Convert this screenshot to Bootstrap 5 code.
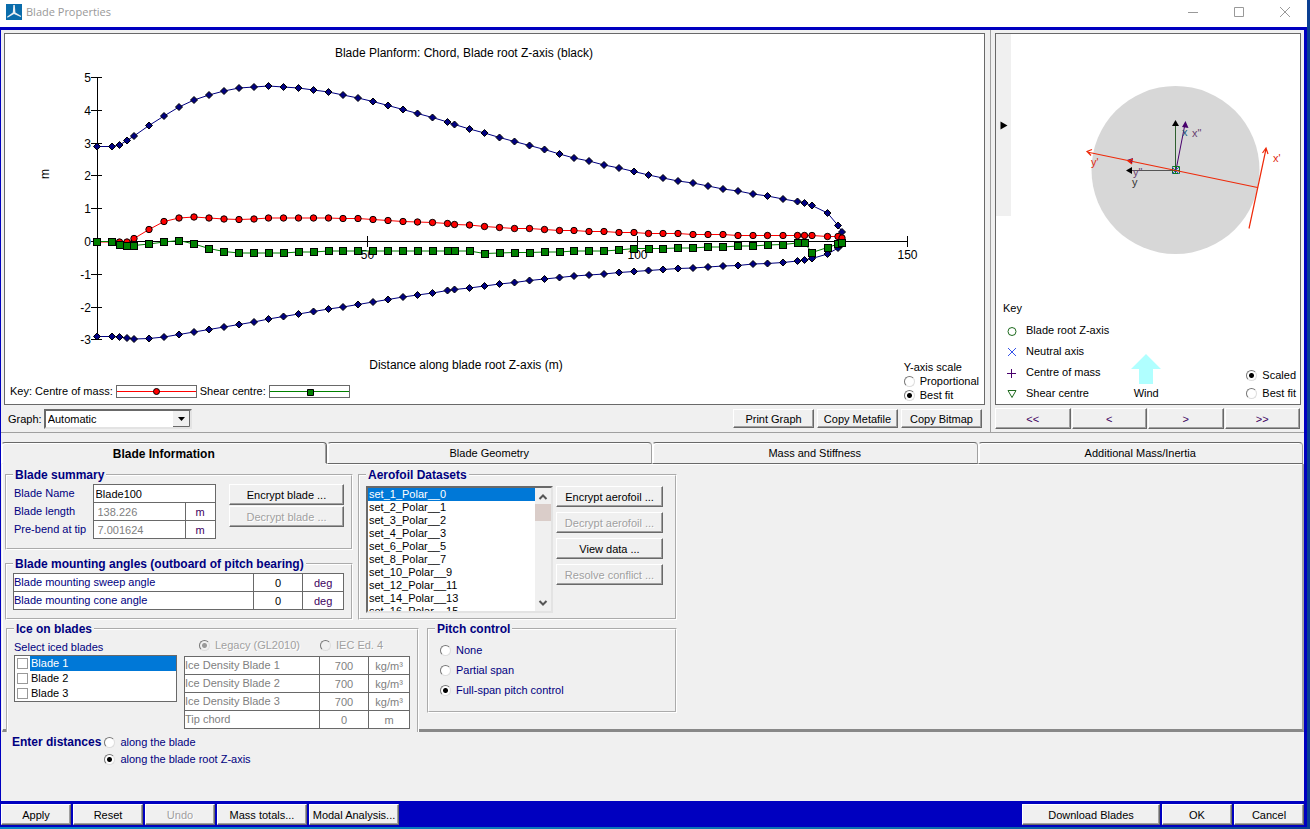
<!DOCTYPE html>
<html lang="en">
<head>
<meta charset="utf-8">
<meta name="viewport" content="width=device-width, initial-scale=1">
<title>Blade Properties</title>
<link href="https://cdn.jsdelivr.net/npm/bootstrap@5.3.0/dist/css/bootstrap.min.css" rel="stylesheet">
<script src="https://cdn.jsdelivr.net/npm/bootstrap@5.3.0/dist/js/bootstrap.bundle.min.js"></script>
<style>
:root{--face:#f0f0f0;--dark:#696969;--mid:#a0a0a0;--navy:#000080;--frame:#0000c0;--sel:#0078d7}
body{font-family:"Liberation Sans",Arial,sans-serif;font-size:11px;line-height:14px;color:#000;background:#0a3f92}
.desk{min-height:100vh;padding:0 3px 3px 0;background:linear-gradient(90deg,#0a84c6,#0a6fae 70%,#0a3f92)}
.titlebar{height:27px;background:#fff;padding:0 14px 4px 6px;font-family:"Open Sans",sans-serif;color:#999}
.titlebar button{border:0;background:none;padding:0;width:16px;height:16px;display:flex;align-items:center;justify-content:center}
.frame{background:var(--face);border:solid var(--frame);border-width:3px 3px 0 1px}
.left-pane{border-right:1px solid var(--mid);padding:3px 5px 0 3px;min-width:0}
.right-pane{width:313px;padding:3px 3px 0 4px}
.canvas{background:#fff;border:1px solid var(--dark)}
.canvas svg{display:block}
.stack{display:grid}
.stack>*{grid-area:1/1}
.stack-foot{align-self:end;padding:0 5px 2px 5px}
.swatch{width:81px;height:13px;border:1px solid var(--dark)}
.tools{height:27px}
.btn.bevel{font-size:11px;line-height:14px;padding:0;height:21px;color:#000;background:var(--face);border-radius:0;border:1px solid;border-color:#fff var(--dark) var(--dark) #fff;box-shadow:inset -1px -1px var(--mid);white-space:nowrap}
.btn.bevel:disabled{color:#a0a0a0;opacity:1;text-shadow:1px 1px #fff}
.tools .btn.tool{height:19px;width:81px}
.nav4{display:grid;grid-template-columns:repeat(4,1fr);gap:1px;padding-right:1px}
.nav4 .btn{color:#400060}
.graph-sel{width:148px;height:20px;border:2px solid;border-color:var(--dark) #e3e3e3 #e3e3e3 var(--dark);border-radius:0;padding:0 0 0 2px;font-size:11px;color:#000;appearance:none;
 background:#fff url("data:image/svg+xml,%3Csvg xmlns='http://www.w3.org/2000/svg' width='17' height='16'%3E%3Cpath fill='%23f0f0f0' d='M0 0h17v16H0z'/%3E%3Cpath fill='none' stroke='%23696969' d='M16.500 0v15.500H0'/%3E%3Cpath d='M5 6h7L8.500 10z'/%3E%3C/svg%3E") right center no-repeat}
input[type=radio]{appearance:none;width:11px;height:11px;margin:0;flex:none;border-radius:50%;background:#fff;border:1px solid;border-color:#777 #ddd #ddd #777}
input[type=radio]:checked{background:radial-gradient(circle,#000 0 2px,#fff 3px)}
input[type=radio]:disabled{background:var(--face)}
input[type=radio]:disabled:checked{background:radial-gradient(circle,#999 0 2px,#f0f0f0 3px)}
.opt{display:flex;align-items:center;gap:5px}
.split{border-bottom:1px solid var(--mid)}
.tabs{border:0;padding:9px 1px 0 0}
.tabs .nav-item{flex:1 1 0}
.tabs .nav-link{width:100%;height:22px;margin:0;padding:0;font-size:11px;line-height:19px;color:#000;background:var(--face);border:1px solid;border-color:var(--dark) var(--mid) var(--dark) #fff;border-radius:4px 4px 0 0;box-shadow:inset 1px 1px #fff,0 1px #fff}
.tabs .nav-link.active{font-weight:700;font-size:12px;line-height:22px;border-color:var(--dark) var(--dark) var(--face) #fff;background:var(--face);color:#000;box-shadow:inset 1px 1px #fff,inset -1px 0 var(--mid)}
.sheet{margin-left:1px;padding:4px 0 0 2px;border-left:1px solid #fff;border-right:2px solid var(--mid);border-bottom:3px solid #888}
fieldset.group{border:2px groove #fff;padding:2px 7px 8px 6px}
fieldset.group>legend{float:none;width:auto;margin:0;padding:0 2px;font-size:12px;line-height:14px;font-weight:700;color:var(--navy)}
.w-sum{width:348px}.w-aero{width:319px;padding-bottom:5px!important}.w-ice{width:413px}.w-pitch{width:250px}
.ink{color:var(--navy)}
.cells{border-collapse:collapse;table-layout:fixed}
.cells td,.cells th{height:18px;padding:0;border:1px solid var(--dark);background:#fff;font-weight:400;line-height:14px;vertical-align:middle}
.cells th.bare{border:0;background:none;padding-left:1px}
.cells th label{display:block;margin-top:-1px}
.cells input{display:block;width:100%;height:16px;border:0;padding:0 2px;background:none;font-size:11px;color:#000}
.cells input:disabled{color:#808080}
.unit{color:#400060;text-align:center}
.off,.off .unit{color:#808080}
.off-label{color:#a0a0a0;text-shadow:1px 1px #fff}
.listbox{width:187px;height:127px;border:2px solid;border-color:var(--dark) #e3e3e3 #e3e3e3 var(--dark);background:#fff}
.listbox select{flex:1;min-width:0;height:123px;border:0;border-radius:0;padding:0;overflow:hidden;outline:0;background:#fff;font-size:11px;scrollbar-width:none}
.listbox option{padding:0 1px;min-height:13px;height:13px;line-height:13px;color:#000}
.listbox option:checked{background:linear-gradient(var(--sel),var(--sel));-webkit-text-fill-color:#fff}
.scroller{width:16px;background:var(--face)}
.thumb{height:17px;background:#dacdc9}
.aero-btns{width:107px;gap:5px}
.checks{width:163px;border:1px solid var(--dark);background:#fff;margin:0;padding:0;list-style:none}
.checks li{display:flex;align-items:center;height:15px;padding-left:2px;gap:2px}
.checks label{flex:1;line-height:15px;padding-left:1px}
.checks .on{background:var(--sel);color:#fff}
.checks input{appearance:none;width:11px;height:11px;margin:0;border:1px solid #999;background:#fff}
.w-ice{position:relative;border-bottom:0!important;background:var(--face);margin-bottom:-3px;padding-bottom:3px!important}
.actions{background:var(--frame);padding:3px 0 2px 0;gap:2px}
.b70{width:70px}.b90{width:90px}.b138{width:138px}
.distances{min-height:69px;padding:3px 0 0 11px}
</style>
</head>
<body>
<div class="desk d-flex flex-column">
  <header class="titlebar d-flex align-items-center justify-content-between">
    <div class="d-flex align-items-center gap-1">
      <svg width="16" height="16" viewBox="0 0 16 16" aria-hidden="true"><path fill="#0a6cab" d="M0 0h16v16H0z"/><path fill="#e8eef2" d="M7.300 1h1.500l.6 7.400 5.800 3.600-.5 1L8 10 1.500 13.800 1 12.800l5.800-4.200z"/></svg>
      <span>Blade Properties</span>
    </div>
    <div class="d-flex" style="gap:30px">
      <button aria-label="Minimise"><svg width="10" height="10"><path d="M0 5.500h10" stroke="#999"/></svg></button>
      <button aria-label="Maximise"><svg width="10" height="10"><path d="M.5.5h9v9h-9z" fill="none" stroke="#999"/></svg></button>
      <button aria-label="Close"><svg width="10" height="10"><path d="M0 0l10 10M10 0L0 10" stroke="#999"/></svg></button>
    </div>
  </header>

  <main class="frame flex-fill d-flex flex-column">
    <div class="split d-flex">
      <section class="left-pane flex-fill">
        <div class="canvas stack">
          <svg id="chart" width="100%" viewBox="5 34 979 370" font-size="12">
            <g text-anchor="middle"><text x="464" y="57">Blade Planform: Chord, Blade root Z-axis (black)</text>
            <text x="466" y="369">Distance along blade root Z-axis (m)</text>
            <text transform="translate(49 174) rotate(-90)">m</text></g>
          </svg>
          <div class="stack-foot d-flex justify-content-between align-items-end">
            <div class="d-flex align-items-center pb-1" style="gap:3px">
              <span>Key: Centre of mass:</span>
              <svg class="swatch" viewBox="0 0 79 11"><path d="M0 5.500h79" stroke="red"/><circle cx="39.500" cy="5.500" r="3" fill="red" stroke="#000"/></svg>
              <span>Shear centre:</span>
              <svg class="swatch" viewBox="0 0 79 11"><path d="M0 5.500h79" stroke="green"/><path d="M37.500 3.500h6v6h-6z" fill="green" stroke="#000"/></svg>
            </div>
            <div>
              <div>Y-axis scale</div>
              <label class="opt"><input type="radio" name="ys">Proportional</label>
              <label class="opt"><input type="radio" name="ys" checked>Best fit</label>
            </div>
          </div>
        </div>
        <div class="tools d-flex align-items-center justify-content-between">
          <div class="d-flex align-items-center ps-1" style="gap:2px"><label for="graph">Graph:</label>
            <select id="graph" class="graph-sel"><option>Automatic</option></select></div>
          <div class="d-flex" style="gap:3px;padding-right:3px">
            <button class="btn bevel tool">Print Graph</button>
            <button class="btn bevel tool">Copy Metafile</button>
            <button class="btn bevel tool">Copy Bitmap</button>
          </div>
        </div>
      </section>
      <section class="right-pane d-flex flex-column">
        <div class="canvas flex-fill d-flex flex-column justify-content-between">
          <svg width="100%" viewBox="996 34 304 240" font-size="11">
            <path fill="#f0f0f0" d="M996 34h15v182h-15z"/><path d="M1000.500 121.500v8l7-4z"/>
            <circle cx="1175.500" cy="170" r="84" fill="#d7d7d7"/>
            <path d="M1175.500 170v-46" stroke="#2f5f2f"/><path d="M1172 126l3.500-6 3.500 6z"/>
            <path d="M1175.500 170.500H1131" stroke="#555"/><path d="M1132 167l-6 3.500 6 3.500z"/>
            <g fill="#48006c"><path d="M1176 170l9-46" stroke="#48006c"/><path d="M1182 127l3.500-6 3 7zM1133 158l-6 2 5 4z"/></g>
            <g fill="none" stroke="#0a7a1e"><path d="M1172.500 166.500h7v7h-7zM1172 170.500h8M1175.500 166v8"/><path stroke="#3552c8" d="M1172 167l7 7M1179 167l-7 7"/></g>
            <g fill="none" stroke="#ee2a0a" stroke-width="1.200"><path d="M1257.500 187.500L1087 152M1092 149.500l-5 2 4 4M1249 228.500L1266 149M1262.500 153l3.500-5 2 6M1133 159l-5 2 4 3"/></g>
            <text x="1182" y="136" fill="#24577a">x</text><text x="1192" y="137" fill="#684070">x"</text>
            <text x="1133" y="176" fill="#684070">y"</text><text x="1132" y="186" fill="#333">y</text>
            <g fill="#e02a10"><text x="1091" y="166">y'</text><text x="1273" y="162">x'</text></g>
          </svg>
          <div class="pe-1 pb-1" style="padding-left:7px">
            <div class="pb-1">Key</div>
            <div class="d-flex align-items-end">
              <ul class="list-unstyled m-0 d-grid" style="gap:7px">
                <li class="d-flex gap-2 ps-1 pt-1"><svg width="11" height="14"><circle cx="5" cy="8.500" r="4" fill="none" stroke="#1e6a1e"/></svg>Blade root Z-axis</li>
                <li class="d-flex gap-2 ps-1"><svg width="11" height="14"><path d="M1 4l8 8M9 4l-8 8" stroke="#3552e8"/></svg>Neutral axis</li>
                <li class="d-flex gap-2 ps-1"><svg width="11" height="14"><path d="M0 8.500h9M4.500 4v9" stroke="#48006c"/></svg>Centre of mass</li>
                <li class="d-flex gap-2 ps-1"><svg width="11" height="14"><path d="M1 4.500h8l-4 7z" fill="none" stroke="#1e6a1e"/></svg>Shear centre</li>
              </ul>
              <div class="text-center d-flex flex-column align-items-center" style="margin-left:22px"><svg width="30" height="30"><path fill="#b0ffff" d="M15 0l15 15h-8v15H8V15H0z"/></svg><span style="padding-top:2px">Wind</span></div>
              <div class="d-grid ms-auto" style="gap:4px"><label class="opt"><input type="radio" name="sc" checked>Scaled</label>
              <label class="opt"><input type="radio" name="sc">Best fit</label></div>
            </div>
          </div>
        </div>
        <div class="tools nav4 align-content-center">
          <button class="btn bevel">&lt;&lt;</button><button class="btn bevel">&lt;</button><button class="btn bevel">&gt;</button><button class="btn bevel">&gt;&gt;</button>
        </div>
      </section>
    </div>

    <ul class="nav nav-tabs tabs">
      <li class="nav-item"><button class="nav-link active">Blade Information</button></li>
      <li class="nav-item"><button class="nav-link">Blade Geometry</button></li>
      <li class="nav-item"><button class="nav-link">Mass and Stiffness</button></li>
      <li class="nav-item"><button class="nav-link">Additional Mass/Inertia</button></li>
    </ul>

    <div class="sheet">
      <div class="d-flex" style="gap:5px">
        <div class="d-flex flex-column justify-content-between w-sum" style="gap:7px">
          <fieldset class="group flex-fill">
            <legend>Blade summary</legend>
            <div class="d-flex justify-content-between align-items-start">
              <table class="cells">
                <colgroup><col style="width:80px"><col style="width:92px"><col style="width:30px"></colgroup>
                <tr><th class="bare ink"><label for="bn">Blade Name</label></th><td colspan="2"><input id="bn" value="Blade100"></td></tr>
                <tr><th class="bare ink"><label for="bl">Blade length</label></th><td><input id="bl" class="px-1" value="138.226" disabled></td><td class="unit">m</td></tr>
                <tr><th class="bare ink"><label for="pb">Pre-bend at tip</label></th><td><input id="pb" class="px-1" value="7.001624" disabled></td><td class="unit">m</td></tr>
              </table>
              <div class="d-grid" style="width:115px;gap:1px"><button class="btn bevel">Encrypt blade ...</button><button class="btn bevel" disabled>Decrypt blade ...</button></div>
            </div>
          </fieldset>
          <fieldset class="group">
            <legend>Blade mounting angles (outboard of pitch bearing)</legend>
            <table class="cells ink">
              <colgroup><col style="width:242px"><col style="width:50px"><col style="width:41px"></colgroup>
              <tr><th><label for="sw">Blade mounting sweep angle</label></th><td><input id="sw" class="text-center" value="0"></td><td class="unit">deg</td></tr>
              <tr><th><label for="cn">Blade mounting cone angle</label></th><td><input id="cn" class="text-center" value="0"></td><td class="unit">deg</td></tr>
            </table>
          </fieldset>
        </div>
        <fieldset class="group w-aero">
          <legend>Aerofoil Datasets</legend>
          <div class="d-flex" style="gap:3px;padding-top:2px">
            <div class="listbox d-flex">
              <select size="9" aria-label="Aerofoil datasets"><option selected>set_1_Polar__0</option><option>set_2_Polar__1</option><option>set_3_Polar__2</option><option>set_4_Polar__3</option><option>set_6_Polar__5</option><option>set_8_Polar__7</option><option>set_10_Polar__9</option><option>set_12_Polar__11</option><option>set_14_Polar__13</option><option>set_16_Polar__15</option></select>
              <div class="scroller d-flex flex-column">
                <svg width="16" height="16"><path d="M4.500 11L8 7.500 11.500 11" fill="none" stroke="#555" stroke-width="2"/></svg>
                <div class="thumb"></div>
                <svg class="mt-auto" width="16" height="16"><path d="M4.500 6L8 9.500 11.500 6" fill="none" stroke="#555" stroke-width="2"/></svg>
              </div>
            </div>
            <div class="aero-btns d-flex flex-column">
              <button class="btn bevel">Encrypt aerofoil ...</button><button class="btn bevel" disabled>Decrypt aerofoil ...</button><button class="btn bevel">View data ...</button><button class="btn bevel" disabled>Resolve conflict ...</button>
            </div>
          </div>
        </fieldset>
      </div>
      <div class="d-flex align-items-start" style="gap:8px;padding:2px 0 0 1px">
        <fieldset class="group w-ice">
          <legend>Ice on blades</legend>
          <div class="d-flex" style="gap:7px">
            <div><div class="ink" style="padding:2px 0 1px">Select iced blades</div>
              <ul class="checks">
                <li><input type="checkbox" id="b1"><label class="on" for="b1">Blade 1</label></li>
                <li><input type="checkbox" id="b2"><label for="b2">Blade 2</label></li>
                <li><input type="checkbox" id="b3"><label for="b3">Blade 3</label></li>
              </ul>
            </div>
            <div>
              <div class="d-flex off-label" style="gap:20px;padding:0 0 4px 15px"><label class="opt"><input type="radio" name="ice" checked disabled>Legacy (GL2010)</label><label class="opt"><input type="radio" name="ice" disabled>IEC Ed. 4</label></div>
              <table class="cells off">
                <colgroup><col style="width:136px"><col style="width:50px"><col style="width:41px"></colgroup>
                <tr><th><label for="i1">Ice Density Blade 1</label></th><td><input id="i1" class="text-center" value="700" disabled></td><td class="unit">kg/m³</td></tr>
                <tr><th><label for="i2">Ice Density Blade 2</label></th><td><input id="i2" class="text-center" value="700" disabled></td><td class="unit">kg/m³</td></tr>
                <tr><th><label for="i3">Ice Density Blade 3</label></th><td><input id="i3" class="text-center" value="700" disabled></td><td class="unit">kg/m³</td></tr>
                <tr><th><label for="i4">Tip chord</label></th><td><input id="i4" class="text-center" value="0" disabled></td><td class="unit">m</td></tr>
              </table>
            </div>
          </div>
        </fieldset>
        <fieldset class="group w-pitch ink">
          <legend>Pitch control</legend>
          <div class="d-grid" style="gap:6px;padding:5px 5px 6px">
            <label class="opt"><input type="radio" name="pc">None</label>
            <label class="opt"><input type="radio" name="pc">Partial span</label>
            <label class="opt"><input type="radio" name="pc" checked>Full-span pitch control</label>
          </div>
        </fieldset>
      </div>
    </div>
    <div class="distances ink d-flex flex-fill" style="gap:3px">
      <b style="font-size:12px">Enter distances</b>
      <div class="d-flex flex-column" style="gap:3px"><label class="opt"><input type="radio" name="di">along the blade</label>
      <label class="opt"><input type="radio" name="di" checked>along the blade root Z-axis</label></div>
    </div>
    <footer class="actions d-flex">
      <button class="btn bevel b70">Apply</button><button class="btn bevel b70">Reset</button><button class="btn bevel b70" disabled>Undo</button><button class="btn bevel b90">Mass totals...</button><button class="btn bevel b90">Modal Analysis...</button>
      <button class="btn bevel b138 ms-auto">Download Blades</button><button class="btn bevel b70">OK</button><button class="btn bevel b70">Cancel</button>
    </footer>
  </main>
</div>
<script>
// Blade stations and the four curves, in chart units
const xs=[97,112,119.5,127,134,149,164,179,194,209,224,239,254,268.5,283.5,298.5,313.5,328.5,343,358,373,388,403,417.5,432.5,447.5,454.5,469.5,484.5,499.5,514.5,529.5,544.5,559.5,574,589,604,619,634,648.5,663,678,693,708,723,738,753,767.5,783,797.5,804.5,812,827.5,838,842];
const upper=[146.5,146.5,145,140.5,136,125.5,116,107,100,95,91,88,87,86,87,88,90,92,95,98,101.5,105.5,109.5,113.5,117.5,122,124.5,129,133,137.5,141.5,145.5,149.5,154,158,161,165,168,171.5,175,178,181,183,186,189,191,194,196,199,201.5,203,205.5,213,225.5,232];
const low=[336.5,336.5,337,338,339,338.5,337,334.5,332,329.5,327,324.5,322,319,316.5,314,311.5,309,307,304.5,302,299.5,297,295,293,290.5,289.5,288,286,284,282.5,280.5,279,277.5,276,275,274,272.5,271.5,270.5,269.5,268.5,268,267,266,265.5,264,263.5,262.5,261,260,258.5,254,248,244];
const mass=[242,242,242,242,238.5,229.5,221.5,218,217,218,219,219.5,219,218,218,218,218,218,218.5,218.5,219.5,220.5,221.5,222,222.5,223.5,224.5,225,226.5,227.5,228.5,228.5,229.5,230.5,230.5,231.5,231.5,232.5,232.5,233.5,233.5,233.5,234.5,234.5,234.5,235.5,235.5,235.5,235.5,235.5,235.5,235.5,236.5,236.5,238];
const shear=[241.5,241.5,244.5,246,245.5,244,242,240.5,244,248.5,251.5,253,253,253,253,252,252,251,251,251,251,251,251,251,251,251,251,251,253.5,253,252.5,252.5,252,252,251,251,251,250,248.5,248.5,248.5,248,248,247,247,246,246,245,244.5,243,243,252.5,247.5,244,243];
let s='<path d="M97.5 77v263M97 241.500h811" stroke="#000"/>';
for(let v=5;v>=-3;v--){const y=Math.round(241-v*32.8)+.5;s+=`<path d="M91 ${y}h11" stroke="#000"/><text x="91" y="${y+4}" text-anchor="end">${v}</text>`}
for(const v of [50,100,150]){const x=Math.round(97+v*5.4)+.5;s+=`<path d="M${x} 236v11" stroke="#000"/><text x="${x}" y="259" text-anchor="middle">${v}</text>`}
const line=(d,c)=>`<polyline fill="none" stroke="${c}" points="${xs.map((x,i)=>x+','+d[i]).join(' ')}"/>`;
const marks=(d,f)=>xs.map((x,i)=>f(x,d[i])).join('');
const dia=(x,y)=>`<path d="M${x} ${y-3.500}l3.500 3.500-3.500 3.500-3.500-3.500z" fill="navy" stroke="#000"/>`;
s+=line(upper,'navy')+marks(upper,dia)+line(low,'navy')+marks(low,dia);
s+=line(mass,'red')+marks(mass,(x,y)=>`<circle cx="${x}" cy="${y}" r="3.200" fill="red" stroke="#000"/>`);
s+=line(shear,'green')+marks(shear,(x,y)=>`<rect x="${Math.round(x)-3.500}" y="${Math.round(y)-3.500}" width="7" height="7" fill="green" stroke="#000"/>`);
document.getElementById('chart').insertAdjacentHTML('beforeend',s);
</script>
</body>
</html>
